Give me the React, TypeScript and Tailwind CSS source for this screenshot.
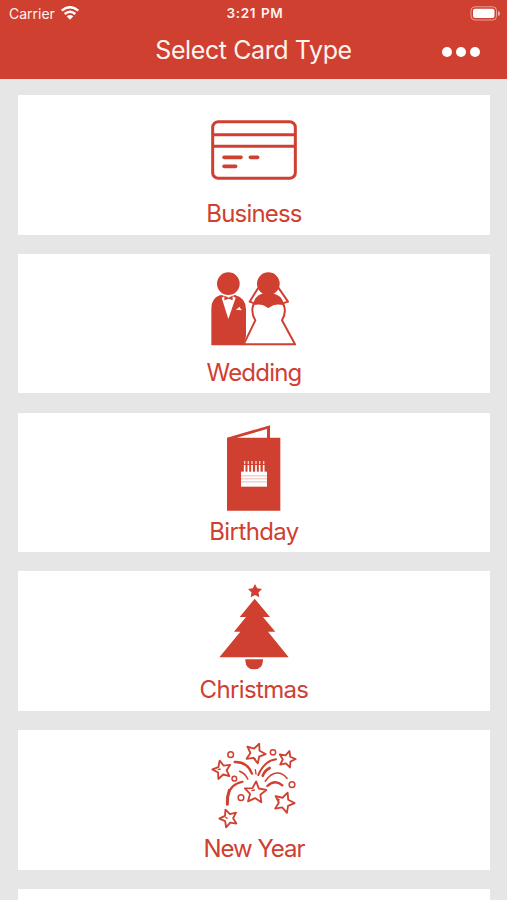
import type { ReactNode } from "react";

const RED = "#cf4031";

const star = (cx: number, cy: number, r: number, rot: number, inner = 0.52) =>
  Array.from({ length: 10 }, (_, i) => {
    const a = ((rot - 90 + i * 36) * Math.PI) / 180;
    const d = i % 2 ? r * inner : r;
    return `${(cx + d * Math.cos(a)).toFixed(1)},${(cy + d * Math.sin(a)).toFixed(1)}`;
  }).join(" ");

function Icon({ viewBox, children }: { viewBox: string; children: ReactNode }) {
  return (
    <svg viewBox={viewBox} className="h-[100px] w-[120px] shrink-0" fill="none" stroke={RED}>
      {children}
    </svg>
  );
}

function BusinessIcon() {
  return (
    <Icon viewBox="-3 -30 360 300">
      <rect x="53" y="50" width="248" height="170" rx="17" strokeWidth="9" />
      <path d="M53 89H301M53 124H301" strokeWidth="9" />
      <path d="M87 157H138M166 157H188M87 184H122" strokeWidth="11" strokeLinecap="round" />
    </Icon>
  );
}

function WeddingIcon() {
  return (
    <Icon viewBox="-3 -25 360 300">
      <g fill={RED} stroke="none">
        <circle cx="100" cy="64" r="34" />
        <path d="M49 249V141Q49 103 80 98Q100 108 120 98Q153 107 153 141V222L145 249Z" />
      </g>
      <path d="M80 106L100 170L122 106L113 102H88Z" fill="white" stroke="none" />
      <path d="M88 100L101 106L113 100V114L101 109L88 114Z" fill={RED} stroke="none" />
      <path d="M122 142L129 138L133 133L137 139L141 144Z" fill="white" stroke="none" />

      <path d="M190 76L164 118L178 123M250 76L279 118L263 123" strokeWidth="6" strokeLinejoin="round" />
      <circle cx="220" cy="64" r="34" fill={RED} stroke="none" />
      <path d="M173 129Q180 95 210 93H230Q261 96 268 129L250 136H190Z" fill={RED} stroke="none" />
      <path
        d="M176 125Q202 119 220 134Q238 119 265 125Q276 149 261 174L300 246H146L181 174Q166 149 176 125Z"
        fill="white"
        strokeWidth="6"
        strokeLinejoin="round"
      />
    </Icon>
  );
}

function BirthdayIcon() {
  return (
    <Icon viewBox="-3 -8 360 300">
      <path d="M96 66L225 29V72H216V40L125 66H256V285H96Z" fill={RED} stroke="none" />
      <path d="M138 168H216V213H138Z" fill="white" stroke="none" />
      <path d="M138 180.500H216M138 189.500H216M138 198.500H216" strokeWidth="2" opacity=".55" />
      <g stroke="white">
        <path d="M149 148V169M160 148V169M171 148V169M183 148V169M194 148V169M206 148V169" strokeWidth="5" />
        <path d="M149 136V145M160 136V145M171 136V145M183 136V145M194 136V145M206 136V145" strokeWidth="4" opacity=".75" />
      </g>
    </Icon>
  );
}

function ChristmasIcon() {
  return (
    <Icon viewBox="-3 -12 360 300">
      <g fill={RED} stroke="none">
        <polygon points={star(180, 49, 22, 0, 0.5)} />
        <path d="M179 71L225 126H204L241 170H219L281 247H73L136 170H117L153 126H134Z" />
        <path d="M151 253H204V257Q202 283 177 283Q153 283 151 257Z" />
      </g>
    </Icon>
  );
}

function NewYearIcon() {
  return (
    <Icon viewBox="-3 -16 360 300">
      <g strokeWidth="5.5" strokeLinejoin="round">
        <polygon points={star(181, 54, 31, 22, 0.48)} />
        <polygon points={star(276, 72, 26, 16, 0.48)} />
        <polygon points={star(81, 104, 29, -14, 0.48)} />
        <polygon points={star(181, 172, 34, 4, 0.48)} />
        <polygon points={star(267, 202, 32, 20, 0.48)} />
        <polygon points={star(101, 249, 28, -20, 0.48)} />
      </g>
      <g strokeWidth="4.5">
        <circle cx="107" cy="58" r="8.5" />
        <circle cx="234" cy="51" r="8" />
        <circle cx="118" cy="130" r="7" />
        <circle cx="291" cy="148" r="8.5" />
        <circle cx="138" cy="187" r="8.5" />
      </g>
      <g strokeLinecap="round">
        <path d="M119 80Q158 79 171 115" strokeWidth="7" />
        <path d="M134 108Q150 114 158 131" strokeWidth="5" />
        <path d="M181 103L183 116" strokeWidth="4" />
        <path d="M190 119Q208 76 243 72" strokeWidth="6" />
        <path d="M203 121Q210 105 224 98" strokeWidth="8" />
        <path d="M211 137Q228 113 247 113Q264 113 276 129" strokeWidth="5" />
        <path d="M217 152Q241 130 262 150" strokeWidth="7" />
        <path d="M143 139Q105 146 98 183" strokeWidth="6" />
        <path d="M103 165Q96 184 97 207" strokeWidth="9" />
      </g>
      <path d="M173 66L182 71M169 166L180 164M248 190L254 195M68 103L77 101M91 246L98 249" strokeWidth="4" />
    </Icon>
  );
}

const cards = [
  { label: "Business", icon: <BusinessIcon />, tracking: "tracking-[-0.8px]" },
  { label: "Wedding", icon: <WeddingIcon />, tracking: "tracking-[-0.8px]" },
  { label: "Birthday", icon: <BirthdayIcon />, tracking: "tracking-[-0.6px]" },
  { label: "Christmas", icon: <ChristmasIcon />, tracking: "tracking-[-0.65px]" },
  { label: "New Year", icon: <NewYearIcon />, tracking: "tracking-[-1px]" },
  { label: "", icon: null, tracking: "" },
];

export default function App() {
  return (
    <div className="flex h-[900px] w-full flex-col overflow-hidden bg-[#e6e6e6] font-['Inter',sans-serif]">
      <header className="h-[79px] shrink-0 bg-[#cf4031] text-[#fff3ee]">
        <div className="grid h-[26px] grid-cols-3 items-center pl-[9px] pr-[6px]">
          <div className="flex items-center gap-[6px] text-[14px]">
            <span>Carrier</span>
            <svg viewBox="0 0 54 42" className="h-[14px] w-[18px]" fill="none" stroke="white" strokeWidth="7">
              <path d="M2 14Q27 -7 52 14M11 24Q27 10 43 24" />
              <path d="M17 31Q27 23 37 31L27 41Z" fill="white" stroke="none" />
            </svg>
          </div>
          <div className="whitespace-nowrap pt-px text-center text-[13.5px] font-semibold tracking-[0.6px] [word-spacing:1px]">3:21 PM</div>
          <svg viewBox="0 0 31 15" className="h-[15px] w-[31px] justify-self-end" fill="none">
            <rect x="1" y=".8" width="25.5" height="13.2" rx="3.8" stroke="white" strokeOpacity=".5" />
            <rect x="3" y="2.8" width="21.5" height="9.2" rx="2" fill="white" />
            <path d="M28 5V10Q30 9.500 30 7.500Q30 5.500 28 5Z" fill="white" opacity=".6" />
          </svg>
        </div>
        <div className="grid h-[49px] grid-cols-[100px_1fr_100px] items-center">
          <span />
          <h1 className="whitespace-nowrap text-center text-[25px] leading-[45px] tracking-[-0.4px]">Select Card Type</h1>
          <div className="flex gap-[4px] justify-self-end pr-[27px] pt-[3px]">
            <i className="size-[10px] rounded-full bg-white" />
            <i className="size-[10px] rounded-full bg-white" />
            <i className="size-[10px] rounded-full bg-white" />
          </div>
        </div>
      </header>
      <main className="flex flex-col gap-[19.1px] pl-[18px] pr-[17px] pt-4">
        {cards.map((card, i) => (
          <section key={i} className="flex h-[139.7px] shrink-0 flex-col items-center bg-white text-[#cf4031]">
            {card.icon}
            <h2 className={`text-[24px] leading-[38.6px] ${card.tracking}`}>{card.label}</h2>
          </section>
        ))}
      </main>
    </div>
  );
}
